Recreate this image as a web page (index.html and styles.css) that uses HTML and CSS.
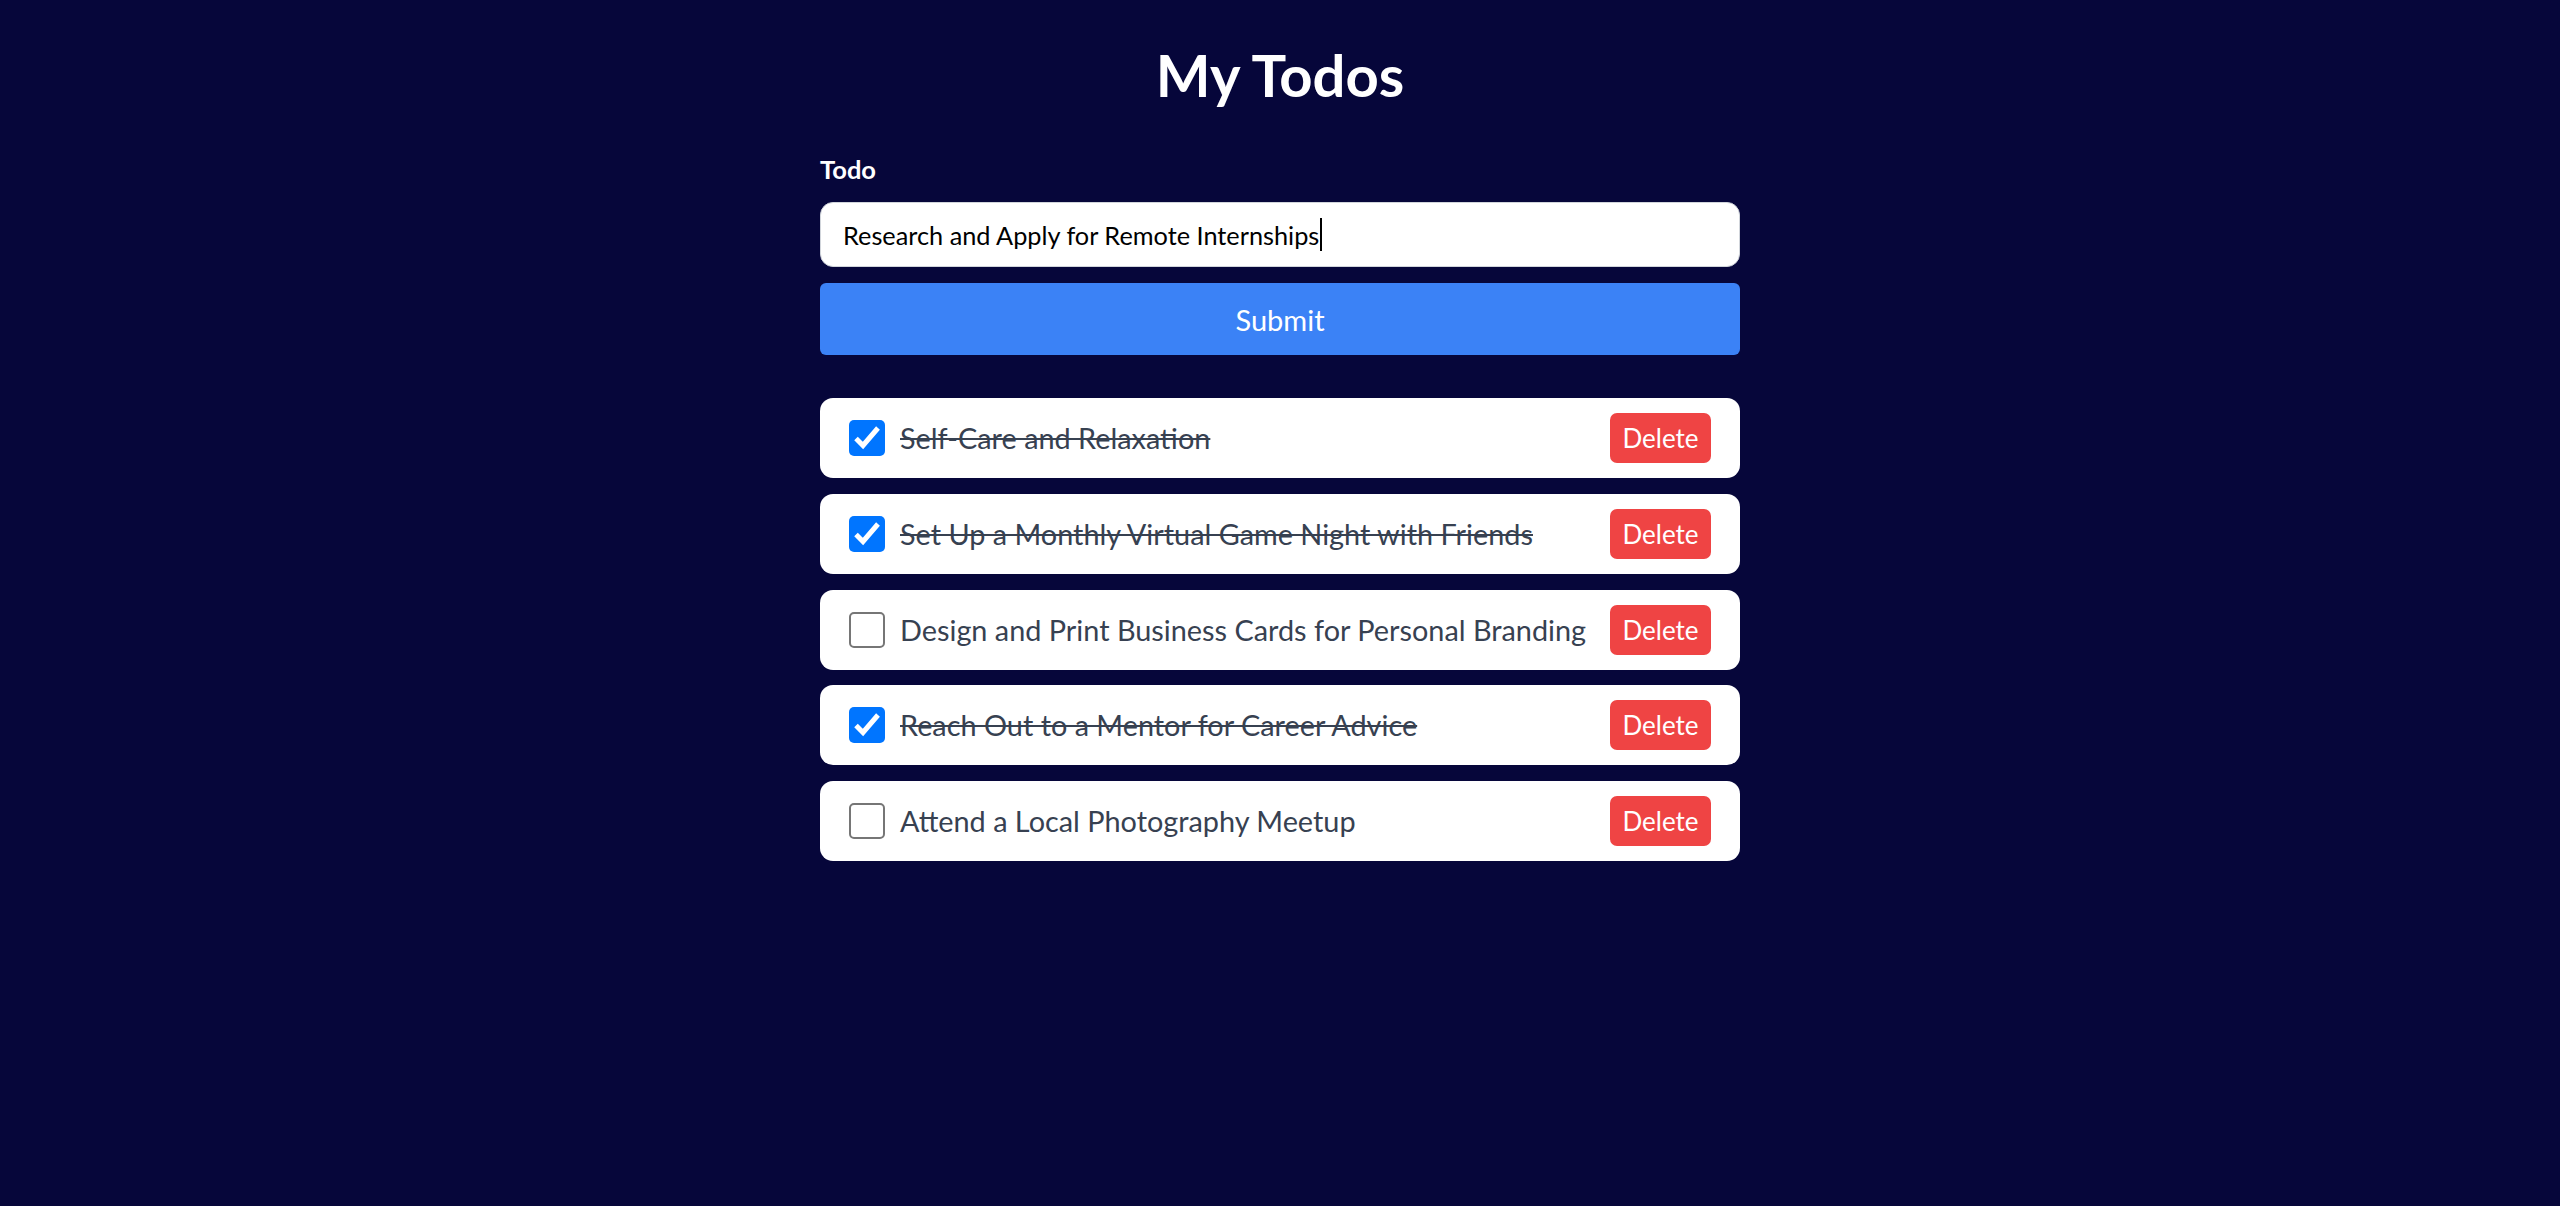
FILE: index.html
```html
<!DOCTYPE html>
<html lang="en">
<head>
<meta charset="utf-8">
<title>My Todos</title>
<link rel="stylesheet" href="styles.css">
</head>
<body>
<main class="app">
  <h1 class="title">My Todos</h1>
  <form class="todo-form">
    <label class="label" for="todo">Todo</label>
    <div class="input" id="todo" role="textbox"><span class="input-text">Research and Apply for Remote Internships</span><span class="caret"></span></div>
    <button type="button" class="submit">Submit</button>
  </form>
  <ul class="list">
    <li class="item done">
      <span class="check checked"><svg viewBox="0 0 36 36" width="36" height="36"><polyline points="7,18.5 14,25.5 29,8" fill="none" stroke="#fff" stroke-width="5" stroke-linejoin="miter"/></svg></span>
      <span class="item-text">Self-Care and Relaxation</span>
      <button type="button" class="delete">Delete</button>
    </li>
    <li class="item done">
      <span class="check checked"><svg viewBox="0 0 36 36" width="36" height="36"><polyline points="7,18.5 14,25.5 29,8" fill="none" stroke="#fff" stroke-width="5" stroke-linejoin="miter"/></svg></span>
      <span class="item-text">Set Up a Monthly Virtual Game Night with Friends</span>
      <button type="button" class="delete">Delete</button>
    </li>
    <li class="item">
      <span class="check"></span>
      <span class="item-text">Design and Print Business Cards for Personal Branding</span>
      <button type="button" class="delete">Delete</button>
    </li>
    <li class="item done">
      <span class="check checked"><svg viewBox="0 0 36 36" width="36" height="36"><polyline points="7,18.5 14,25.5 29,8" fill="none" stroke="#fff" stroke-width="5" stroke-linejoin="miter"/></svg></span>
      <span class="item-text">Reach Out to a Mentor for Career Advice</span>
      <button type="button" class="delete">Delete</button>
    </li>
    <li class="item">
      <span class="check"></span>
      <span class="item-text">Attend a Local Photography Meetup</span>
      <button type="button" class="delete">Delete</button>
    </li>
  </ul>
</main>
</body>
</html>
```

FILE: styles.css
```css
html, body {
  margin: 0;
  padding: 0;
}
body {
  background: #06063a;
  font-family: Lato, "Noto Sans", sans-serif;
  min-height: 1206px;
}
.app {
  width: 920px;
  margin: 0 auto;
  padding-top: 39px;
}
.title {
  margin: 0;
  font-size: 58px;
  line-height: 72px;
  font-weight: 700;
  color: #fff;
  text-align: center;
}
.todo-form {
  display: flex;
  flex-direction: column;
  margin-top: 42px;
}
.label {
  color: #fff;
  font-weight: 700;
  font-size: 25.5px;
  line-height: 32px;
}
.input {
  margin-top: 17px;
  height: 65px;
  box-sizing: border-box;
  background: #fff;
  border: 1px solid #d1d5db;
  border-radius: 13px;
  padding-left: 22px;
  display: flex;
  align-items: center;
  font-size: 25.3px;
  color: #000;
}
.caret {
  display: inline-block;
  width: 2px;
  height: 33px;
  background: #000;
  margin-left: 1px;
}
.submit {
  margin-top: 16px;
  height: 72px;
  border: 0;
  border-radius: 6px;
  background: #3b82f6;
  color: #fff;
  font-family: inherit;
  font-size: 29px;
  padding: 0;
}
.list {
  list-style: none;
  margin: 43px 0 0;
  padding: 0;
  display: flex;
  flex-direction: column;
  gap: 15.75px;
}
.item {
  height: 80px;
  box-sizing: border-box;
  background: #fff;
  border-radius: 13px;
  padding: 0 29px;
  display: flex;
  align-items: center;
}
.check {
  width: 36px;
  height: 36px;
  box-sizing: border-box;
  border: 2px solid #767676;
  border-radius: 5px;
  background: #fff;
  flex: none;
}
.check.checked {
  border: 0;
  background: #0075ff;
}
.check svg {
  display: block;
}
.item-text {
  flex: 1;
  margin-left: 15px;
  font-size: 28.85px;
  color: #374151;
  white-space: nowrap;
}
.done .item-text {
  text-decoration: line-through;
}
.delete {
  flex: none;
  width: 101px;
  height: 50px;
  border: 0;
  border-radius: 7px;
  background: #ef4444;
  color: #fff;
  font-family: inherit;
  font-size: 26px;
  padding: 0;
}
```
